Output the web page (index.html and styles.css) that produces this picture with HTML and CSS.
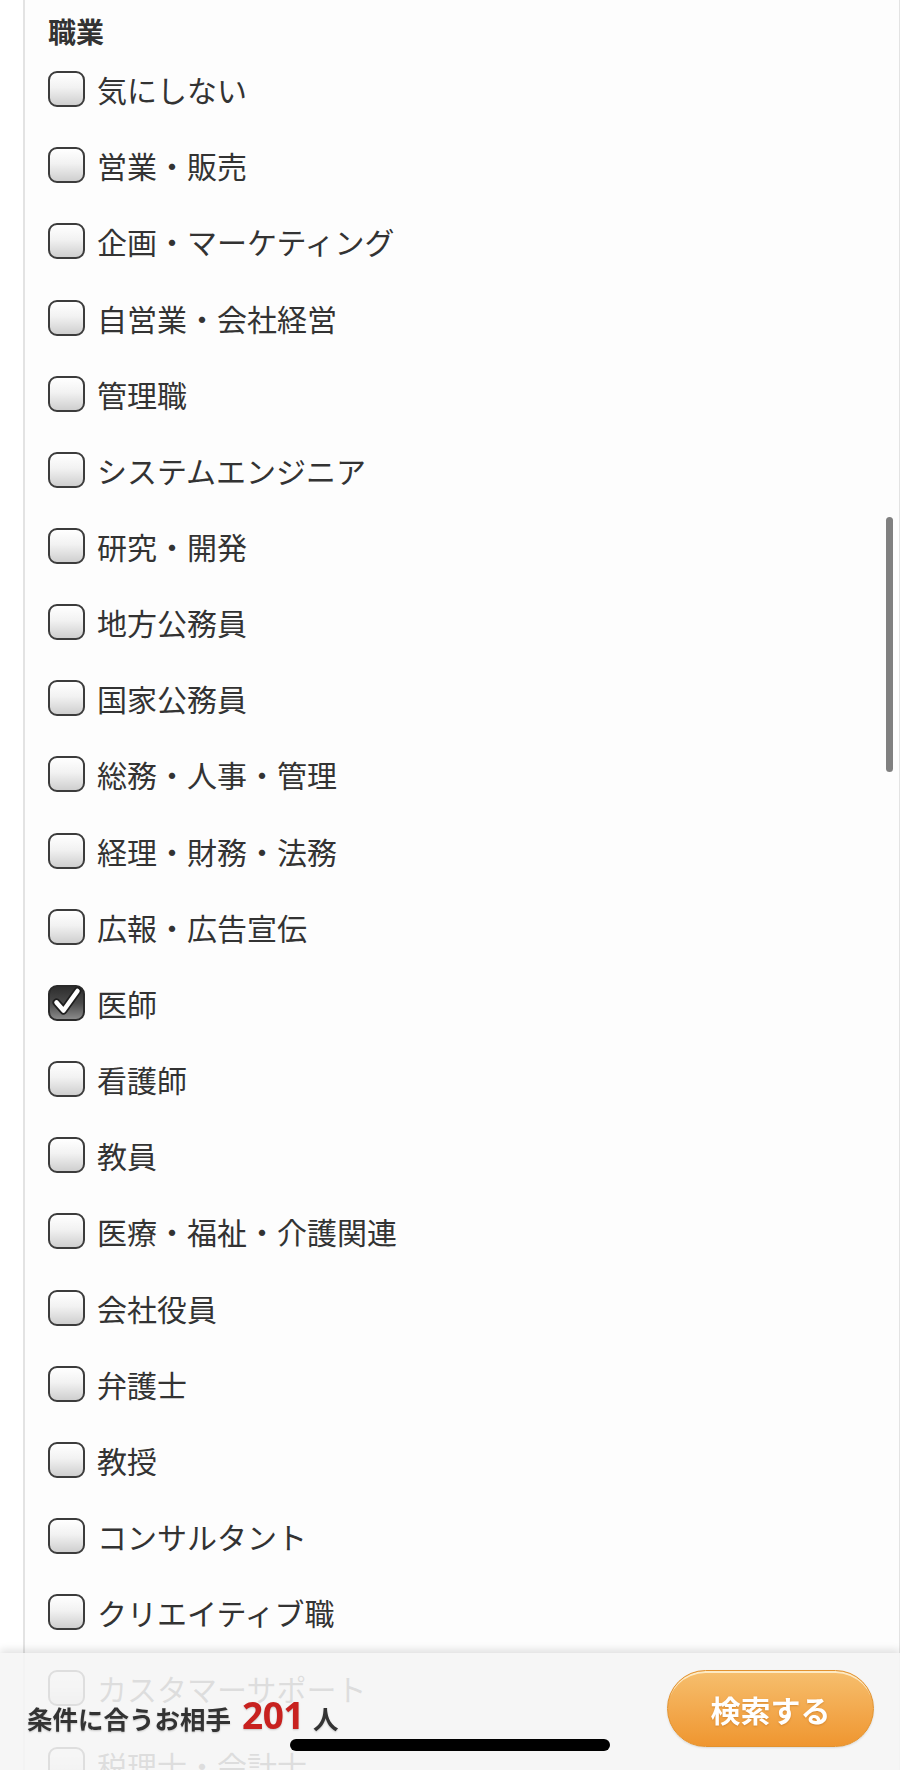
FILE: index.html
```html
<!DOCTYPE html>
<html lang="ja">
<head>
<meta charset="utf-8">
<link rel="stylesheet" href="styles.css">
</head>
<body>
<div class="card">
  <h2 class="heading">職業</h2>
  <ul class="options">
    <li class="option"><span class="box"></span><span class="label">気にしない</span></li>
    <li class="option"><span class="box"></span><span class="label">営業・販売</span></li>
    <li class="option"><span class="box"></span><span class="label">企画・マーケティング</span></li>
    <li class="option"><span class="box"></span><span class="label">自営業・会社経営</span></li>
    <li class="option"><span class="box"></span><span class="label">管理職</span></li>
    <li class="option"><span class="box"></span><span class="label">システムエンジニア</span></li>
    <li class="option"><span class="box"></span><span class="label">研究・開発</span></li>
    <li class="option"><span class="box"></span><span class="label">地方公務員</span></li>
    <li class="option"><span class="box"></span><span class="label">国家公務員</span></li>
    <li class="option"><span class="box"></span><span class="label">総務・人事・管理</span></li>
    <li class="option"><span class="box"></span><span class="label">経理・財務・法務</span></li>
    <li class="option"><span class="box"></span><span class="label">広報・広告宣伝</span></li>
    <li class="option"><span class="box checked"><svg viewBox="0 0 37 36" width="37" height="36"><path class="tick-outline" d="M8.5 18.5 L15.5 26.5 L29.5 7"/><path class="tick" d="M8.5 18.5 L15.5 26.5 L29.5 7"/></svg></span><span class="label">医師</span></li>
    <li class="option"><span class="box"></span><span class="label">看護師</span></li>
    <li class="option"><span class="box"></span><span class="label">教員</span></li>
    <li class="option"><span class="box"></span><span class="label">医療・福祉・介護関連</span></li>
    <li class="option"><span class="box"></span><span class="label">会社役員</span></li>
    <li class="option"><span class="box"></span><span class="label">弁護士</span></li>
    <li class="option"><span class="box"></span><span class="label">教授</span></li>
    <li class="option"><span class="box"></span><span class="label">コンサルタント</span></li>
    <li class="option"><span class="box"></span><span class="label">クリエイティブ職</span></li>
    <li class="option"><span class="box"></span><span class="label">カスタマーサポート</span></li>
    <li class="option"><span class="box"></span><span class="label">税理士・会計士</span></li>
  </ul>
</div>
<div class="scrollbar"></div>
<div class="bottombar">
  <p class="count">条件に合うお相手<span class="num">201</span>人</p>
  <button class="search">検索する</button>
  <div class="home-indicator"></div>
</div>
</body>
</html>
```
FILE: styles.css
```css
html, body {
  margin: 0;
  padding: 0;
  background: #ffffff;
}
body {
  font-family: "Noto Sans CJK JP", "Noto Sans", sans-serif;
  color: #333333;
  height: 1770px;
  overflow: hidden;
}
.card {
  margin-left: 23px;
  width: 851px;
  border-left: 2px solid #e3e3e3;
  border-right: 2px solid #e3e3e3;
  background: #fdfdfd;
  padding-left: 23px;
  box-sizing: content-box;
}
.heading {
  margin: 0;
  padding-top: 12px;
  font-size: 28px;
  line-height: 39px;
  font-weight: bold;
  color: #333;
}
.options {
  list-style: none;
  margin: 0;
  padding: 0;
}
.option {
  height: 76.16px;
  display: flex;
  align-items: center;
  gap: 12px;
}
.box {
  width: 37px;
  height: 36px;
  box-sizing: border-box;
  border: 2.5px solid #3c3c3c;
  border-radius: 9px;
  background: linear-gradient(#ffffff 0%, #f2f2f2 45%, #cfcfcf 100%);
  flex: none;
  position: relative;
}
.box.checked {
  background: linear-gradient(#2e2e2e 0%, #4a4a4a 50%, #8a8a8a 100%);
  border-color: #2a2a2a;
}
.box.checked svg {
  position: absolute;
  left: -2.5px;
  top: -2.5px;
}
.tick-outline {
  fill: none;
  stroke: #1e1e1e;
  stroke-width: 8;
  stroke-linecap: round;
  stroke-linejoin: round;
}
.tick {
  fill: none;
  stroke: #ffffff;
  stroke-width: 4.5;
  stroke-linecap: round;
  stroke-linejoin: round;
}
.label {
  font-size: 30px;
  line-height: 40px;
  color: #333;
  white-space: nowrap;
}
.scrollbar {
  position: absolute;
  left: 886px;
  top: 517px;
  width: 7px;
  height: 255px;
  border-radius: 4px;
  background: #808080;
}
.bottombar {
  position: fixed;
  left: 0;
  right: 0;
  bottom: 0;
  height: 117px;
  background: rgba(245, 245, 245, 0.88);
  box-shadow: 0 -3px 8px rgba(0, 0, 0, 0.12);
  display: flex;
  align-items: flex-start;
  justify-content: space-between;
  padding: 0 26px 0 27px;
  box-sizing: border-box;
}
.count {
  margin: 0;
  margin-top: 42px;
  font-size: 25.5px;
  line-height: 40px;
  font-weight: bold;
  color: #333;
  text-shadow: 0 1px 2px rgba(0, 0, 0, 0.2);
  white-space: nowrap;
}
.num {
  font-family: "Noto Sans", "Liberation Sans", sans-serif;
  font-size: 37px;
  color: #c8211f;
  margin: 0 9px 0 11px;
  letter-spacing: -0.5px;
}
.search {
  margin-top: 17px;
  width: 207px;
  height: 77px;
  border-radius: 39px;
  border: 1.5px solid #e2922e;
  background: linear-gradient(#f6bf6e 0%, #f3aa4f 50%, #ef9630 100%);
  box-shadow: inset 0 3px 0 -1px rgba(255, 248, 225, 0.75), 0 1px 2px rgba(0, 0, 0, 0.12);
  color: #ffffff;
  font-family: "Noto Sans CJK JP", sans-serif;
  font-size: 30px;
  font-weight: bold;
  text-shadow: 0 1px 2px rgba(160, 80, 0, 0.35);
  padding: 0;
}
.home-indicator {
  position: absolute;
  left: 290px;
  top: 86px;
  width: 320px;
  height: 12px;
  border-radius: 6px;
  background: #000;
}
```
